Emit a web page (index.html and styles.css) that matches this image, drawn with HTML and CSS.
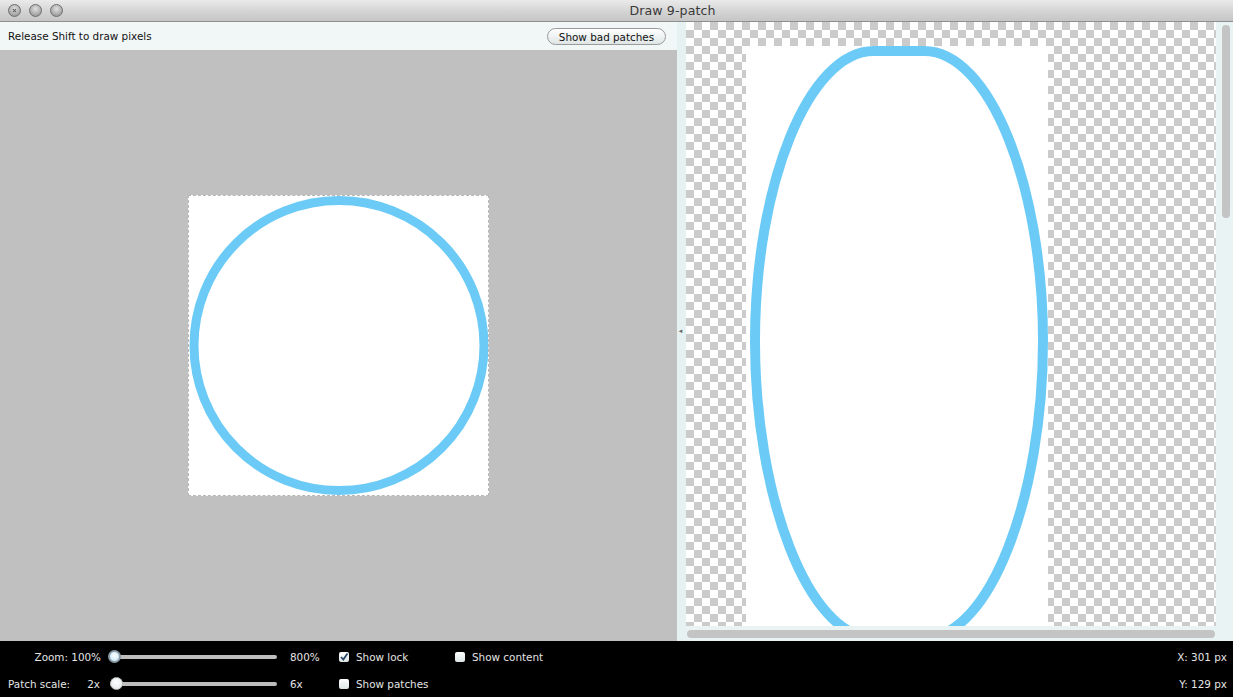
FILE: index.html
```html
<!DOCTYPE html>
<html>
<head>
<meta charset="utf-8">
<title>Draw 9-patch</title>
<link rel="stylesheet" href="styles.css">
</head>
<body>
<div class="window">
  <div class="titlebar">
    <div class="lights">
      <span class="light close"><svg viewBox="0 0 12 12" width="12" height="12"><path d="M4 4 L8 8 M8 4 L4 8" stroke="#555" stroke-width="1.4" fill="none"/></svg></span>
      <span class="light"></span>
      <span class="light"></span>
    </div>
    <div class="title">Draw 9-patch</div>
  </div>
  <div class="main">
    <div class="left">
      <div class="toolbar">
        <span class="hint">Release Shift to draw pixels</span>
        <button class="pill">Show bad patches</button>
      </div>
      <div class="canvas">
        <div class="patch">
          <svg viewBox="0 0 301 301" width="301" height="301">
            <circle cx="151" cy="150.5" r="145" fill="none" stroke="#6ccbf6" stroke-width="9"/>
          </svg>
        </div>
      </div>
    </div>
    <div class="divider"><span class="grip">◂</span></div>
    <div class="right">
      <div class="viewrow">
        <div class="viewport">
          <div class="stretched">
            <svg viewBox="0 0 302 600" width="302" height="600">
              <path d="M153 5 H178 C244 5 297 140 297 295 C297 450 244 592 178 592 H128 C62 592 9 450 9 295 C9 140 62 5 128 5 Z" fill="none" stroke="#6ccbf6" stroke-width="10"/>
            </svg>
          </div>
        </div>
        <div class="vscroll"><div class="vthumb"></div></div>
      </div>
      <div class="hscroll"><div class="hthumb"></div></div>
    </div>
  </div>
  <div class="bottom">
    <div class="cell label-r">Zoom: 100%</div>
    <div class="cell"><div class="slider"><div class="thumb focus"></div></div></div>
    <div class="cell val">800%</div>
    <div class="cell"><span class="check on"><svg viewBox="0 0 10 10" width="10" height="10"><path d="M2 5 L4.3 7.5 L8.5 1.5" stroke="#2a4a66" stroke-width="1.8" fill="none"/></svg></span>Show lock</div>
    <div class="cell"><span class="check"></span>Show content</div>
    <div class="cell coord">X: 301 px</div>

    <div class="cell label-split"><span>Patch scale:</span><span>2x</span></div>
    <div class="cell"><div class="slider"><div class="thumb"></div></div></div>
    <div class="cell val">6x</div>
    <div class="cell"><span class="check"></span>Show patches</div>
    <div class="cell"></div>
    <div class="cell coord">Y: 129 px</div>
  </div>
</div>
</body>
</html>
```

FILE: styles.css
```css
* { box-sizing: border-box; }
html, body { margin: 0; padding: 0; }
body {
  width: 1233px;
  height: 697px;
  overflow: hidden;
  font-family: "DejaVu Sans", "Liberation Sans", sans-serif;
  font-size: 10.4px;
  background: #000;
}
.window { display: flex; flex-direction: column; width: 1233px; height: 697px; }

.titlebar {
  height: 22px;
  flex: none;
  position: relative;
  background: linear-gradient(#eaeaea, #d2d2d2 60%, #c6c6c6);
  border-bottom: 1px solid #8f8f8f;
  display: flex;
  align-items: center;
  justify-content: center;
  padding-left: 112px;
}
.lights { position: absolute; left: 8px; top: 4px; display: flex; gap: 8px; }
.light {
  width: 13px; height: 13px; border-radius: 50%;
  background: radial-gradient(circle at 50% 35%, #e0e0e0, #a3a3a3 70%, #858585);
  border: 1px solid #6f6f6f;
  display: flex; align-items: center; justify-content: center;
}
.light svg { width: 9px; height: 9px; }
.title { font-size: 12.6px; color: #3a3a3a; letter-spacing: 0.1px; }

.main { display: flex; height: 619px; flex: none; }

.left { width: 677px; display: flex; flex-direction: column; }
.toolbar {
  height: 28px;
  background: #f1f6f6;
  display: flex;
  align-items: center;
  justify-content: space-between;
  padding: 0 11px 0 8px;
}
.hint { color: #111; }
.pill {
  font-family: inherit;
  font-size: 10.4px;
  color: #111;
  height: 17px;
  width: 119px;
  padding: 0;
  border-radius: 9px;
  border: 1px solid #9a9a9a;
  background: linear-gradient(#ffffff, #eef2f2 50%, #dfe5e5);
  margin-top: 1px;
}
.canvas {
  flex: 1;
  background: #c0c0c0;
  display: flex;
  align-items: center;
  justify-content: center;
}
.patch {
  width: 301px;
  height: 301px;
  background: #fff;
  outline: 1px dashed #b8b8b8;
  outline-offset: -1px;
}
.patch svg { display: block; }

.divider {
  width: 9px;
  background: #e6f1f1;
  display: flex;
  align-items: center;
  justify-content: center;
}
.grip { font-size: 7px; color: #666; line-height: 1; margin-left: -2px; }

.right { flex: 1; display: flex; flex-direction: column; background: #e9f3f3; }
.viewrow { flex: 1; display: flex; }
.viewport {
  width: 530px;
  height: 604px;
  overflow: hidden;
  background-color: #fff;
  background-image:
    linear-gradient(45deg, #cbcbcb 25%, transparent 25%, transparent 75%, #cbcbcb 75%),
    linear-gradient(45deg, #cbcbcb 25%, transparent 25%, transparent 75%, #cbcbcb 75%);
  background-size: 16px 16px;
  background-position: 0 0, 8px 8px;
  padding: 24px 0 0 60px;
}
.stretched { width: 302px; height: 600px; background: #fff; }
.stretched svg { display: block; }
.vscroll { flex: 1; padding: 3px 3px 0 6px; }
.vthumb { width: 8px; height: 193px; border-radius: 4px; background: #c4c4c4; }
.hscroll { height: 15px; padding: 4px 18px 0 1px; }
.hthumb { height: 8px; border-radius: 4px; background: #c4c4c4; }

.bottom {
  flex: 1;
  background: #000;
  color: #e4e4e4;
  display: grid;
  grid-template-columns: 104px 182px 53px 116px 1fr auto;
  grid-template-rows: 27px 27px;
  padding-top: 2px;
}
.cell { display: flex; align-items: center; }
.label-r { justify-content: flex-end; padding-right: 3px; }
.label-split { justify-content: space-between; padding: 0 4px 0 8px; }
.val { padding-left: 4px; }
.coord { justify-content: flex-end; padding-right: 6px; }
.slider {
  position: relative;
  margin-left: 6px;
  width: 167px;
  height: 4px;
  border-radius: 2px;
  background: #bdbdbd;
}
.thumb {
  position: absolute;
  left: 0;
  top: -5px;
  width: 13px;
  height: 13px;
  border-radius: 50%;
  background: radial-gradient(circle at 50% 40%, #ffffff, #dfe6e6);
  border: 1px solid #bbb;
}
.thumb.focus {
  left: -2px;
  border: 2px solid #8a9aa6;
  background: radial-gradient(circle at 50% 40%, #ffffff, #bfe4f6);
}
.check {
  width: 10px;
  height: 10px;
  border-radius: 2px;
  background: linear-gradient(#ffffff, #dde4e4);
  margin-right: 7px;
  display: inline-flex;
  align-items: center;
  justify-content: center;
}
.check svg { display: block; }
```
